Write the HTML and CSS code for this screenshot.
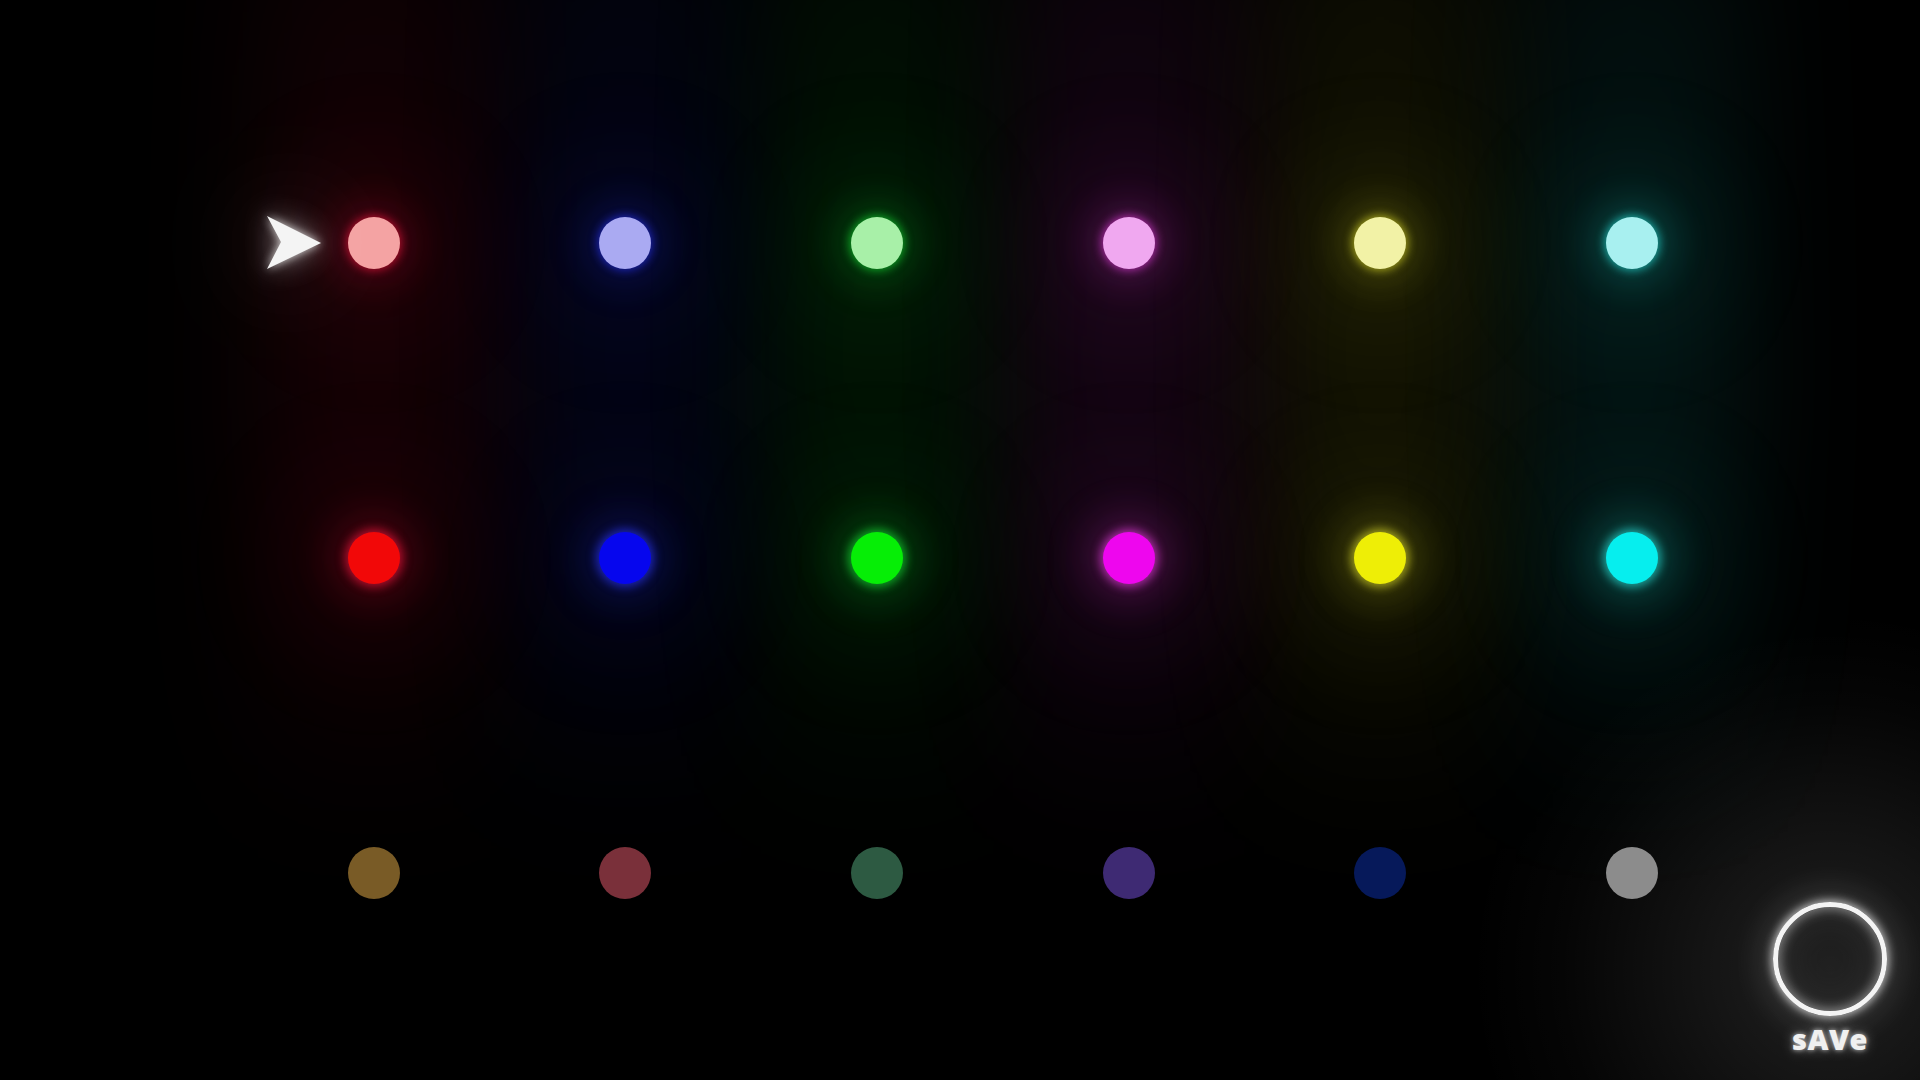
FILE: index.html
```html
<!DOCTYPE html>
<html lang="en">
<head>
<meta charset="utf-8">
<title>Colour picker</title>
<link rel="stylesheet" href="styles.css">
</head>
<body>
<main class="board">
  <div class="col red">
    <div class="cell">
      <span class="arrow"><svg viewBox="0 0 54 53" width="54" height="53"><polygon points="0,0 54,27 0,53 14,26" fill="#f4f4f4"/></svg></span>
      <span class="dot light"></span>
    </div>
    <div class="cell"><span class="dot vivid"></span></div>
    <div class="cell"><span class="dot muted m1"></span></div>
  </div>
  <div class="col blue">
    <div class="cell"><span class="dot light"></span></div>
    <div class="cell"><span class="dot vivid"></span></div>
    <div class="cell"><span class="dot muted m2"></span></div>
  </div>
  <div class="col green">
    <div class="cell"><span class="dot light"></span></div>
    <div class="cell"><span class="dot vivid"></span></div>
    <div class="cell"><span class="dot muted m3"></span></div>
  </div>
  <div class="col magenta">
    <div class="cell"><span class="dot light"></span></div>
    <div class="cell"><span class="dot vivid"></span></div>
    <div class="cell"><span class="dot muted m4"></span></div>
  </div>
  <div class="col yellow">
    <div class="cell"><span class="dot light"></span></div>
    <div class="cell"><span class="dot vivid"></span></div>
    <div class="cell"><span class="dot muted m5"></span></div>
  </div>
  <div class="col cyan">
    <div class="cell"><span class="dot light"></span></div>
    <div class="cell"><span class="dot vivid"></span></div>
    <div class="cell"><span class="dot muted m6"></span></div>
  </div>
</main>
<button class="save" type="button">
  <span class="ring"></span>
  <span class="label">sAVe</span>
</button>
</body>
</html>
```
FILE: styles.css
```css
html, body {
  margin: 0;
  padding: 0;
}

body {
  width: 1920px;
  height: 1080px;
  overflow: hidden;
  position: relative;
  background-color: #000;
  background-image: radial-gradient(circle 360px at 1830px 970px, rgba(255,255,255,0.13) 0%, rgba(255,255,255,0.07) 40%, rgba(255,255,255,0.02) 75%, rgba(255,255,255,0) 100%);
  font-family: "Liberation Sans", Arial, sans-serif;
}

.board {
  display: flex;
  height: 1080px;
  box-sizing: border-box;
  padding-left: 248px;
}

.col {
  position: relative;
  width: 251.6px;
  flex: 0 0 251.6px;
  box-sizing: border-box;
  padding-top: 85px;
  display: flex;
  flex-direction: column;
}

.col::before {
  content: "";
  position: absolute;
  left: 10px;
  right: 10px;
  top: -80px;
  height: 920px;
  background: linear-gradient(to bottom,
    rgba(var(--c), 0.05) 0%,
    rgba(var(--c), 0.08) 30%,
    rgba(var(--c), 0.09) 50%,
    rgba(var(--c), 0.06) 75%,
    rgba(var(--c), 0) 100%);
  filter: blur(60px);
  z-index: 0;
}

.red     { --c: 240, 20, 60;   --v: #f20808; --l: #f4a3a3; }
.blue    { --c: 40, 50, 240;   --v: #0606ee; --l: #aaaaf2; }
.green   { --c: 20, 220, 50;   --v: #06ee06; --l: #a8f0a8; }
.magenta { --c: 230, 60, 220;  --v: #ee06ee; --l: #f0a8f0; }
.yellow  { --c: 220, 220, 40;  --v: #eeee06; --l: #f2f2a6; }
.cyan    { --c: 40, 230, 220;  --v: #06eeee; --l: #a8f0f0; }

.cell {
  position: relative;
  z-index: 1;
  height: 315px;
  display: flex;
  align-items: center;
  justify-content: center;
}

.dot {
  display: block;
  width: 52px;
  height: 52px;
  border-radius: 50%;
}

.dot.light {
  background: var(--l);
  box-shadow:
    0 0 8px 2px rgba(var(--c), 0.6),
    0 0 40px 14px rgba(var(--c), 0.2),
    0 0 120px 60px rgba(var(--c), 0.08);
}

.dot.vivid {
  background: var(--v);
  box-shadow:
    0 0 10px 3px rgba(var(--c), 0.65),
    0 0 44px 16px rgba(var(--c), 0.22),
    0 0 130px 60px rgba(var(--c), 0.08);
}

.m1 { background: #795b26; }
.m2 { background: #7a303a; }
.m3 { background: #2d5a42; }
.m4 { background: #3e2a73; }
.m5 { background: #06195a; }
.m6 { background: #8c8c8c; }

.arrow {
  position: absolute;
  left: 19px;
  top: 131px;
  width: 54px;
  height: 53px;
  filter: drop-shadow(0 0 5px rgba(255,255,255,0.8)) drop-shadow(0 0 14px rgba(255,255,255,0.45)) drop-shadow(0 0 50px rgba(255,255,255,0.25));
}

.arrow svg {
  display: block;
}

.save {
  position: absolute;
  left: 1773px;
  top: 902px;
  width: 114px;
  padding: 0;
  margin: 0;
  border: 0;
  background: transparent;
  display: flex;
  flex-direction: column;
  align-items: center;
  gap: 9px;
  cursor: pointer;
}

.ring {
  display: block;
  width: 114px;
  height: 114px;
  box-sizing: border-box;
  border: 5px solid #f4f4f4;
  border-radius: 50%;
  box-shadow:
    0 0 8px 2px rgba(255,255,255,0.65),
    inset 0 0 12px 2px rgba(255,255,255,0.45),
    inset 0 0 40px 6px rgba(255,255,255,0.08),
    0 0 36px 8px rgba(255,255,255,0.16);
}

.label {
  font-family: "Open Sans", "Liberation Sans", Arial, sans-serif;
  font-weight: 800;
  font-size: 29px;
  line-height: 28px;
  letter-spacing: 0.5px;
  color: #f0f0f0;
  text-shadow: 0 0 5px rgba(255,255,255,0.7), 0 0 14px rgba(255,255,255,0.35);
}
```
